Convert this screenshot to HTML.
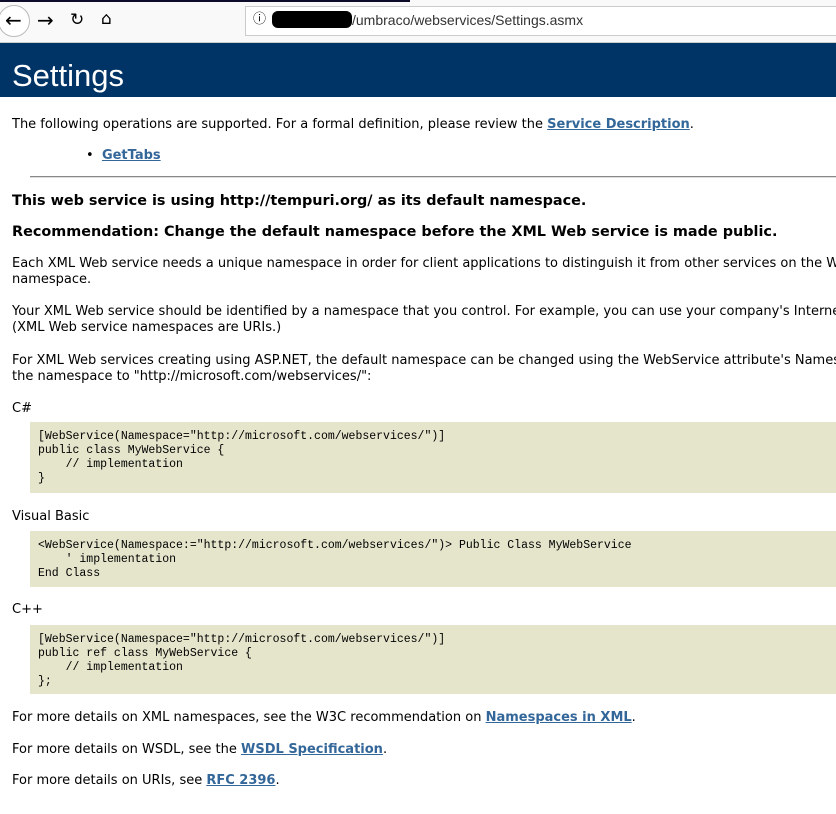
<!DOCTYPE html>
<html><head><meta charset="utf-8"><style>
body{margin:0;width:836px;height:814px;overflow:hidden;background:#fff;font-family:"DejaVu Sans","Liberation Sans",sans-serif;font-size:13px;color:#000;position:relative}
.a{position:absolute;white-space:nowrap;line-height:16px}
.b{font-weight:bold;font-size:14.4px;line-height:18px}
a{color:#336699;font-weight:bold;text-decoration:underline}
.code{position:absolute;left:30px;right:0;background:#e5e5cc;font-family:"Liberation Mono",monospace;font-size:11.5px;line-height:14px;padding:8px 0 0 8px;white-space:pre;box-sizing:border-box}
</style></head><body>
<div style="position:absolute;left:0;top:0;width:836px;height:42px;background:#f9f9fa;border-bottom:1px solid #ccc"></div>
<div style="position:absolute;left:0;top:0;width:410px;height:2px;background:#0c0c2a"></div>
<div style="position:absolute;left:0;top:5px;width:30px;height:30px;border:1px solid #bbb;border-radius:50%;background:#fff;left:-2px"></div>
<div class="a" style="left:5px;top:9px;font-size:20px;line-height:22px">←</div>
<div class="a" style="left:37px;top:9px;font-size:20px;line-height:22px">→</div>
<div class="a" style="left:70px;top:9px;font-size:17px;line-height:22px">↻</div>
<div class="a" style="left:101px;top:8px;font-size:17px;line-height:22px">⌂</div>
<div style="position:absolute;left:245px;top:6px;width:600px;height:28px;border:1px solid #ccc;background:#fff"></div>
<div class="a" style="left:253px;top:12px;font-size:13px">ⓘ</div>
<div style="position:absolute;left:272px;top:11px;width:80px;height:17px;background:#000;border-radius:6px"></div>
<div class="a" style="left:352px;top:12px;font-family:'Liberation Sans',sans-serif;font-size:14px;color:#333">/umbraco/webservices/Settings.asmx</div>
<div style="position:absolute;left:0;top:43px;width:836px;height:54px;background:#003366"></div>
<div class="a" style="left:12px;top:58px;color:#fff;font-family:'Liberation Sans',sans-serif;font-size:31px;line-height:36px">Settings</div>
<div class="a" style="left:12px;top:117px">The following operations are supported. For a formal definition, please review the <a>Service Description</a>.</div>
<div class="a" style="left:86px;top:148px">•&nbsp;&nbsp;<a>GetTabs</a></div>
<div style="position:absolute;left:30px;right:0;top:176px;border-top:1px solid #888;border-bottom:1px solid #ddd"></div>
<div class="a b" style="left:12px;top:192px">This web service is using http://tempuri.org/ as its default namespace.</div>
<div class="a b" style="left:12px;top:223px">Recommendation: Change the default namespace before the XML Web service is made public.</div>
<div class="a" style="left:12px;top:256px">Each XML Web service needs a unique namespace in order for client applications to distinguish it from other services on the Web.<br>namespace.</div>
<div class="a" style="left:12px;top:304px">Your XML Web service should be identified by a namespace that you control. For example, you can use your company's Internet<br>(XML Web service namespaces are URIs.)</div>
<div class="a" style="left:12px;top:353px">For XML Web services creating using ASP.NET, the default namespace can be changed using the WebService attribute's Namespace<br>the namespace to "http://microsoft.com/webservices/":</div>
<div class="a" style="left:12px;top:401px">C#</div>
<div class="code" style="top:422px;height:71px">[WebService(Namespace="http://microsoft.com/webservices/")]
public class MyWebService {
    // implementation
}</div>
<div class="a" style="left:12px;top:509px">Visual Basic</div>
<div class="code" style="top:531px;height:56px">&lt;WebService(Namespace:="http://microsoft.com/webservices/")&gt; Public Class MyWebService
    ' implementation
End Class</div>
<div class="a" style="left:12px;top:602px">C++</div>
<div class="code" style="top:625px;height:69px">[WebService(Namespace="http://microsoft.com/webservices/")]
public ref class MyWebService {
    // implementation
};</div>
<div class="a" style="left:12px;top:710px">For more details on XML namespaces, see the W3C recommendation on <a>Namespaces in XML</a>.</div>
<div class="a" style="left:12px;top:742px">For more details on WSDL, see the <a>WSDL Specification</a>.</div>
<div class="a" style="left:12px;top:773px">For more details on URIs, see <a>RFC 2396</a>.</div>
</body></html>
